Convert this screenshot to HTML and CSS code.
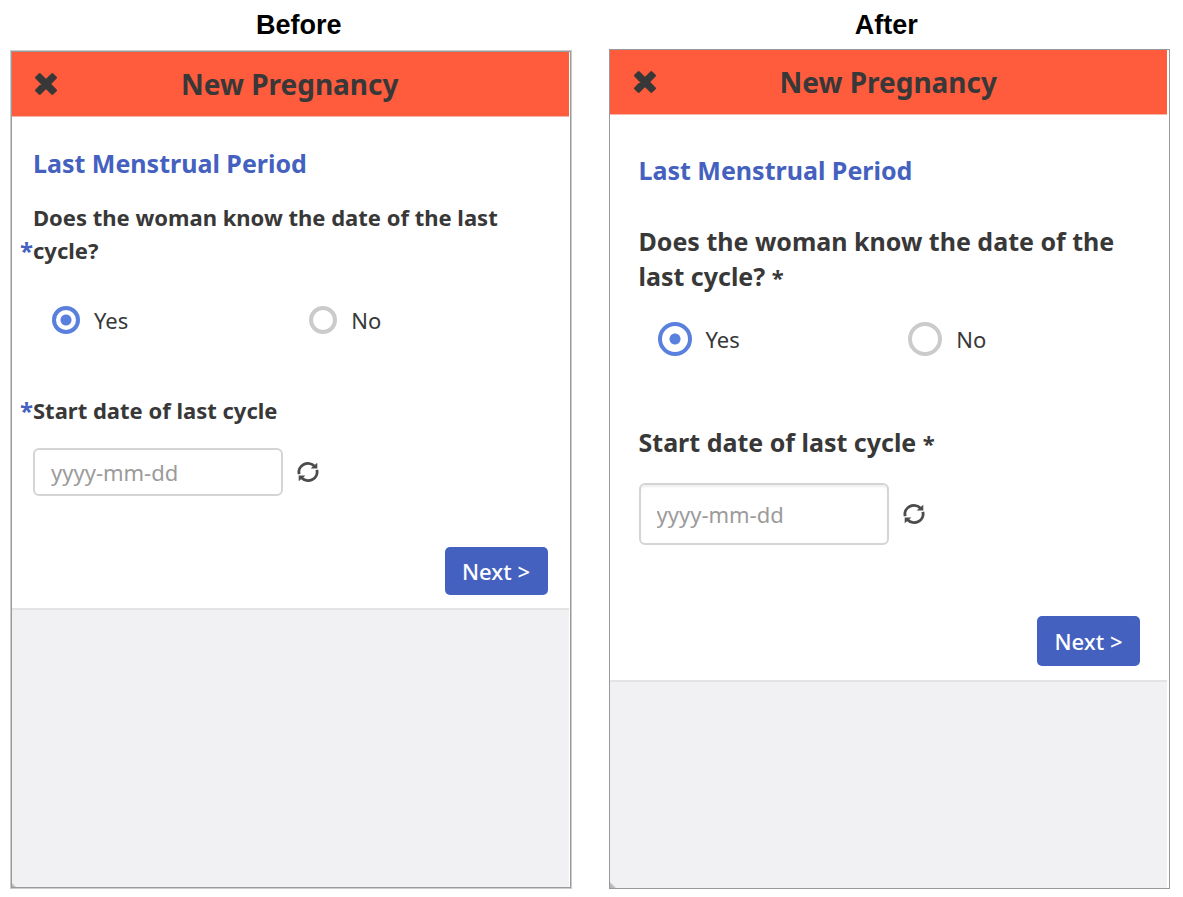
FILE: index.html
```
<!DOCTYPE html>
<html lang="en">
<head>
<meta charset="utf-8">
<title>New Pregnancy: before and after</title>
<link rel="stylesheet" href="styles.css">
</head>
<body>
<svg class="sprite" aria-hidden="true">
  <symbol id="close" viewBox="0 0 24 24"><path d="M5.700 2.300 12 8.600 18.300 2.300 21.700 5.700 15.400 12 21.700 18.300 18.300 21.700 12 15.400 5.700 21.700 2.300 18.300 8.600 12 2.300 5.700Z" fill="currentColor" stroke="currentColor" stroke-width="2.600" stroke-linejoin="round"/></symbol>
  <symbol id="refresh" viewBox="0 0 22 22"><path d="M2.200 13.200A9 8.600 0 0 1 17.500 5.200M19.800 8.800A9 8.600 0 0 1 4.500 16.800" fill="none" stroke="currentColor" stroke-width="2.900"/><path d="M20.300 1.800V7.600H13.600ZM1.700 20.200V14.400H8.400Z" fill="currentColor"/></symbol>
</svg>
<main class="compare">
  <section class="column before">
    <h1 class="caption">Before</h1>
    <div class="panel">
      <header class="bar">
        <button class="close" type="button" aria-label="Close"><svg class="close-icon"><use href="#close"/></svg></button>
        <h2 class="bar-title">New Pregnancy</h2>
      </header>
      <form class="form">
        <h3 class="section-title">Last Menstrual Period</h3>
        <fieldset class="choice">
          <legend class="question"><span class="required">*</span>Does the woman know the date of the last cycle?</legend>
          <div class="options">
            <label class="option"><input class="radio" type="radio" name="known-a" checked>Yes</label>
            <label class="option"><input class="radio" type="radio" name="known-a">No</label>
          </div>
        </fieldset>
        <label class="question date-label" for="date-a"><span class="required">*</span>Start date of last cycle</label>
        <div class="date-row">
          <input class="date" id="date-a" type="text" placeholder="yyyy-mm-dd">
          <button class="refresh" type="button" aria-label="Reset date"><svg class="refresh-icon"><use href="#refresh"/></svg></button>
        </div>
        <button class="next" type="button">Next &gt;</button>
      </form>
    </div>
  </section>
  <section class="column after">
    <h1 class="caption">After</h1>
    <div class="panel">
      <header class="bar">
        <button class="close" type="button" aria-label="Close"><svg class="close-icon"><use href="#close"/></svg></button>
        <h2 class="bar-title">New Pregnancy</h2>
      </header>
      <form class="form">
        <h3 class="section-title">Last Menstrual Period</h3>
        <fieldset class="choice">
          <legend class="question">Does the woman know the date of the last cycle? <span class="required">*</span></legend>
          <div class="options">
            <label class="option"><input class="radio" type="radio" name="known-b" checked>Yes</label>
            <label class="option"><input class="radio" type="radio" name="known-b">No</label>
          </div>
        </fieldset>
        <label class="question date-label" for="date-b">Start date of last cycle <span class="required">*</span></label>
        <div class="date-row">
          <input class="date" id="date-b" type="text" placeholder="yyyy-mm-dd">
          <button class="refresh" type="button" aria-label="Reset date"><svg class="refresh-icon"><use href="#refresh"/></svg></button>
        </div>
        <button class="next" type="button">Next &gt;</button>
      </form>
    </div>
  </section>
</main>
</body>
</html>
```
FILE: styles.css
```
* { box-sizing: border-box; }
body { margin: 0; background: #fff; color: #383838; font-family: "Noto Sans", sans-serif; }
h1, h2, h3, fieldset, legend { margin: 0; padding: 0; border: 0; }
button { padding: 0; border: 0; background: none; color: inherit; font: inherit; cursor: pointer; }
.sprite { position: absolute; width: 0; height: 0; }

.compare { display: grid; grid-template-columns: 1fr 1fr; gap: 37px; min-height: 100vh; padding: 0 13px 8px 10px; }
.column { display: flex; flex-direction: column; }
.caption { height: 50px; color: #000; font: bold 27px/50px "Liberation Sans", Arial, sans-serif; text-align: center; }
.before .caption { padding-left: 16px; }
.after .caption { height: 49px; padding-right: 6px; }

.panel { flex: 1; padding-right: 2px; border: 1px solid #999; background: linear-gradient(45deg, #b8b8b8 3px, transparent 5px) content-box, linear-gradient(#f1f1f4, #f1f1f4) content-box, #fff; }
.before .panel { border-color: #ccc; outline: 1px solid #999; outline-offset: -2px; }
.bar { display: grid; grid-template-columns: 70px 1fr 70px; align-items: center; height: 65px; border-bottom: 1px solid #f3b5a8; background: #ff5c3e; }
.close { justify-self: center; display: flex; }
.close-icon { width: 24px; height: 24px; }
.bar-title { font-size: 28px; line-height: 38px; text-align: center; }

.form { display: flex; flex-direction: column; border-bottom: 2px solid #e4e4e4; background: #fff; }
.section-title { color: #4561c0; font-size: 25px; line-height: 34px; }
.question { position: relative; font-weight: bold; }
.options { display: grid; grid-template-columns: 1fr 1fr; }
.option { display: flex; align-items: center; gap: 14px; padding-left: 19px; font-size: 22px; line-height: 34px; }
.radio { flex: none; appearance: none; width: 28px; height: 28px; margin: 0; border: 4px solid #cbcbcb; border-radius: 50%; background: #fff; }
.radio:checked { border-color: #5880dc; background: radial-gradient(circle, #5880dc 5px, #fff 6px); }
.date-row { display: flex; align-items: center; gap: 14px; }
.date { width: 250px; height: 48px; padding: 0 16px; border: 2px solid #d5d5d5; border-radius: 6px; background: #fff; color: #383838; font: 22px "Noto Sans", sans-serif; }
.date::placeholder { color: #9b9b9b; opacity: 1; }
.refresh { display: flex; color: #4c4c4c; }
.refresh-icon { width: 22px; height: 22px; }
.next { align-self: flex-end; width: 103px; height: 48px; border-radius: 5px; background: #4561c0; color: #fff; font-size: 22px; font-weight: 500; }

.before .bar { height: 66px; }
.before .form { padding: 29px 21px 13px 22px; }
.before .question { font-size: 22px; line-height: 33px; }
.before .required { position: absolute; right: 100%; bottom: 0; color: #4561c0; font-size: 24px; }
.before .section-title { margin-bottom: 21px; }
.before .options { margin-top: 36px; }
.before .date-label { margin-top: 57px; margin-bottom: 21px; }
.before .next { margin-top: 51px; }

.after .form { padding: 38px 27px 14px 29px; }
.after .question { font-size: 25px; line-height: 35px; }
.after .required { font-size: 22px; }
.after .section-title { margin-bottom: 37px; }
.after .options { margin-top: 27px; }
.after .radio { width: 34px; height: 34px; }
.after .date-label { margin-top: 69px; margin-bottom: 22px; }
.after .date { height: 62px; box-shadow: inset 0 2px 2px #f0f0f0; }
.after .next { height: 50px; margin-top: 71px; }
```
